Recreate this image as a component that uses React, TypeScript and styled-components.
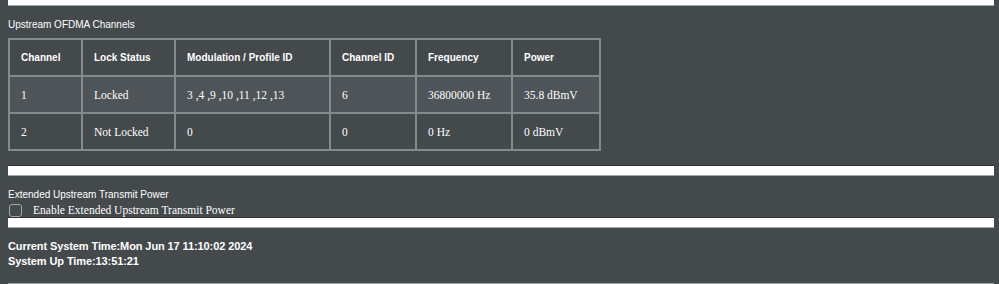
import styled, {createGlobalStyle} from 'styled-components';

const GlobalStyle = createGlobalStyle`
  html, body {
    margin: 0;
    padding: 0;
    background: #44494c;
  }
  body {
    font-family: "Liberation Sans", Arial, sans-serif;
    color: #ffffff;
  }
`;

const rows = [
    {channel: '1', lock: 'Locked', modulation: '3 ,4 ,9 ,10 ,11 ,12 ,13', id: '6', freq: '36800000 Hz', power: '35.8 dBmV'},
    {channel: '2', lock: 'Not Locked', modulation: '0', id: '0', freq: '0 Hz', power: '0 dBmV'},
];

const columns = [
    {label: 'Channel', width: 73},
    {label: 'Lock Status', width: 93},
    {label: 'Modulation / Profile ID', width: 155},
    {label: 'Channel ID', width: 86},
    {label: 'Frequency', width: 96},
    {label: 'Power', width: 88},
];

function App() {
    return (
        <Page>
            <GlobalStyle/>
            <Divider $first/>

            <Caption $top={13}>Upstream OFDMA Channels</Caption>
            <Table>
                <colgroup>
                    {columns.map(c => <col key={c.label} style={{width: c.width}}/>)}
                </colgroup>
                <thead>
                    <tr>
                        {columns.map(c => <Th key={c.label}>{c.label}</Th>)}
                    </tr>
                </thead>
                <tbody>
                    {rows.map((r, i) => (
                        <Row key={r.channel} $shaded={i === 0}>
                            <Td>{r.channel}</Td>
                            <Td>{r.lock}</Td>
                            <Td>{r.modulation}</Td>
                            <Td>{r.id}</Td>
                            <Td>{r.freq}</Td>
                            <Td>{r.power}</Td>
                        </Row>
                    ))}
                </tbody>
            </Table>

            <Divider $top={14}/>

            <Caption $top={13}>Extended Upstream Transmit Power</Caption>
            <CheckRow>
                <Check/>
                <CheckLabel>Enable Extended Upstream Transmit Power</CheckLabel>
            </CheckRow>
            <Divider/>

            <Status>
                <div>Current System Time:Mon Jun 17 11:10:02 2024</div>
                <div>System Up Time:13:51:21</div>
            </Status>
            <BottomRule/>
        </Page>
    );
}

export default App;


const Page = styled.div`
  display: flex;
  flex-direction: column;
  padding: 0 5px 0 8px;
  height: 284px;
  overflow: hidden;
`;

const Divider = styled.div<{$top?: number; $first?: boolean}>`
  flex-shrink: 0;
  height: ${p => (p.$first ? 6 : 11)}px;
  margin-top: ${p => p.$top ?? 0}px;
  background: #ffffff;
  border-top: ${p => (p.$first ? 'none' : '1px solid #2f3335')};
  border-bottom: 1px solid #9ea3a5;
  box-sizing: border-box;
`;

const Caption = styled.div<{$top: number}>`
  flex-shrink: 0;
  margin-top: ${p => p.$top}px;
  font-size: 10px;
  line-height: 12px;
  color: #ffffff;
`;

const Table = styled.table`
  flex-shrink: 0;
  margin-top: 7px;
  width: 591px;
  border-collapse: collapse;
  table-layout: fixed;
  border: 2px solid #848b8e;
`;

const Th = styled.th`
  height: 35px;
  padding: 0 11px;
  text-align: left;
  font-size: 10px;
  font-weight: bold;
  color: #ffffff;
  border: 2px solid #848b8e;
  white-space: nowrap;
`;

const Row = styled.tr<{$shaded: boolean}>`
  background: ${p => (p.$shaded ? '#4e5457' : 'transparent')};
`;

const Td = styled.td`
  height: 35px;
  padding: 0 11px;
  font-family: "Liberation Serif", "Times New Roman", serif;
  font-size: 11.5px;
  color: #ffffff;
  border: 2px solid #848b8e;
  white-space: nowrap;
`;

const CheckRow = styled.div`
  flex-shrink: 0;
  display: flex;
  align-items: center;
  gap: 11px;
  height: 14px;
  margin-top: 2px;
`;

const Check = styled.span`
  box-sizing: border-box;
  width: 13px;
  height: 13px;
  margin-left: 1px;
  border: 1px solid #a3a8aa;
  border-radius: 3px;
  background: #44494c;
`;

const CheckLabel = styled.span`
  font-family: "Liberation Serif", "Times New Roman", serif;
  font-size: 11.5px;
  color: #ffffff;
`;

const Status = styled.div`
  flex-shrink: 0;
  margin-top: 11px;
  font-size: 11px;
  line-height: 15px;
  font-weight: bold;
  letter-spacing: -0.1px;
  color: #ffffff;
`;

const BottomRule = styled.div`
  flex-shrink: 0;
  margin-top: 14px;
  height: 2px;
  background: #9ea3a5;
`;
